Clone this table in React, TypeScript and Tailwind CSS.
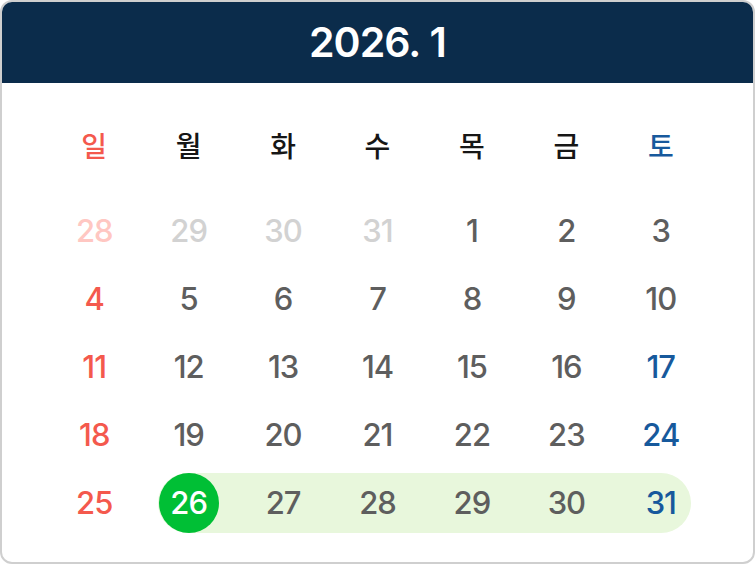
import React from "react";

const weeks: number[][] = [
  [28, 29, 30, 31, 1, 2, 3],
  [4, 5, 6, 7, 8, 9, 10],
  [11, 12, 13, 14, 15, 16, 17],
  [18, 19, 20, 21, 22, 23, 24],
  [25, 26, 27, 28, 29, 30, 31],
];

const days = ["일", "월", "화", "수", "목", "금", "토"];

const numFont = { fontFamily: "Inter, 'Noto Sans', sans-serif" };
const krFont = { fontFamily: "'Noto Sans CJK KR', 'Noto Sans', sans-serif" };

function colorFor(wi: number, di: number): string {
  if (wi === 0 && di < 4) return di === 0 ? "text-[#ffc7c2]" : "text-[#d2d2d2]";
  if (di === 0) return "text-[#f4594d]";
  if (di === 6 && wi >= 2) return "text-[#17599c]";
  return "text-[#5e5e5e]";
}

export default function App() {
  return (
    <div className="w-[755px] h-[564px] bg-white">
      <div className="w-full h-full rounded-[12px] border-2 border-[#cfcfcf] overflow-hidden flex flex-col bg-white">
        <div className="h-[83px] -mt-[2px] -mx-[2px] bg-[#0b2c4b] flex items-center justify-center shrink-0 rounded-t-[12px]">
          <span className="text-white text-[41px] font-semibold tracking-[-1px] pt-[2px]" style={numFont}>
            2026.&nbsp;1
          </span>
        </div>
        <div className="px-[45px] pt-[28px]">
          <div className="grid grid-cols-7 h-[68px] items-center">
            {days.map((d, i) => (
              <div
                key={d}
                className={`text-center text-[28px] font-medium ${
                  i === 0 ? "text-[#f4594d]" : i === 6 ? "text-[#17599c]" : "text-[#161616]"
                }`}
                style={krFont}
              >
                {d}
              </div>
            ))}
          </div>
          <div className="mt-[18px] flex flex-col">
            {weeks.map((w, wi) => (
              <div key={wi} className="grid grid-cols-7 h-[68px] items-center">
                {wi === 4 && (
                  <div className="col-start-2 col-end-8 row-start-1 mx-[17px] h-[60px] rounded-full bg-[#e8f7dc]" />
                )}
                {w.map((d, di) => {
                  const today = wi === 4 && di === 1;
                  return (
                    <div
                      key={di}
                      className="row-start-1 flex items-center justify-center relative"
                      style={{ gridColumnStart: di + 1 }}
                    >
                      {today ? (
                        <div
                          className="w-[60px] h-[60px] rounded-full bg-[#00bf35] flex items-center justify-center text-white text-[31px] font-medium tracking-[-1px]"
                          style={numFont}
                        >
                          {d}
                        </div>
                      ) : (
                        <span
                          className={`text-[31px] font-medium tracking-[-1px] ${colorFor(wi, di)}`}
                          style={numFont}
                        >
                          {d}
                        </span>
                      )}
                    </div>
                  );
                })}
              </div>
            ))}
          </div>
        </div>
      </div>
    </div>
  );
}
